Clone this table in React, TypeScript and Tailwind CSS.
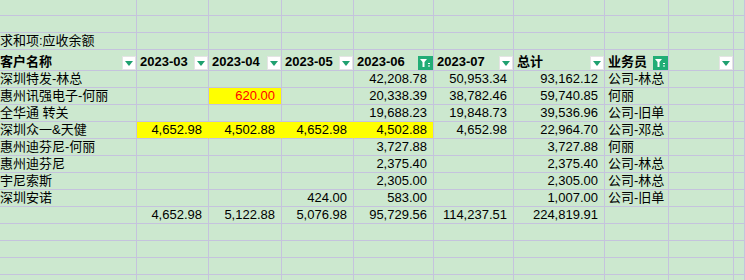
type Cell = { v?: string; hl?: boolean; red?: boolean };

const cols = ["", "2023-03", "2023-04", "2023-05", "2023-06", "2023-07", "总计", "业务员", ""];

const rows: { name: string; vals: Cell[]; rep: string }[] = [
    { name: "深圳特发-林总", vals: [{}, {}, {}, { v: "42,208.78" }, { v: "50,953.34" }, { v: "93,162.12" }], rep: "公司-林总" },
    { name: "惠州讯强电子-何丽", vals: [{}, { v: "620.00", hl: true, red: true }, {}, { v: "20,338.39" }, { v: "38,782.46" }, { v: "59,740.85" }], rep: "何丽" },
    { name: "全华通 转关", vals: [{}, {}, {}, { v: "19,688.23" }, { v: "19,848.73" }, { v: "39,536.96" }], rep: "公司-旧单" },
    {
        name: "深圳众一&天健",
        vals: [{ v: "4,652.98", hl: true }, { v: "4,502.88", hl: true }, { v: "4,652.98", hl: true }, { v: "4,502.88", hl: true }, { v: "4,652.98" }, { v: "22,964.70" }],
        rep: "公司-邓总",
    },
    { name: "惠州迪芬尼-何丽", vals: [{}, {}, {}, { v: "3,727.88" }, {}, { v: "3,727.88" }], rep: "何丽" },
    { name: "惠州迪芬尼", vals: [{}, {}, {}, { v: "2,375.40" }, {}, { v: "2,375.40" }], rep: "公司-林总" },
    { name: "宇尼索斯", vals: [{}, {}, {}, { v: "2,305.00" }, {}, { v: "2,305.00" }], rep: "公司-林总" },
    { name: "深圳安诺", vals: [{}, {}, { v: "424.00" }, { v: "583.00" }, {}, { v: "1,007.00" }], rep: "公司-旧单" },
];

const totals = ["4,652.98", "5,122.88", "5,076.98", "95,729.56", "114,237.51", "224,819.91"];

const grid = "grid grid-cols-[137px_72px_73px_72px_80px_80px_91px_64px_65px_1fr]";
const line = "border-r border-b border-[#c5c3dd]";

function Drop() {
    return (
        <div className="absolute right-0 bottom-0 w-[14px] h-[14px] bg-white border border-[#e4e4e4] flex items-center justify-center">
            <svg width="8" height="5" viewBox="0 0 8 5">
                <polygon points="0,0 8,0 4,5" fill="#1fa070" />
            </svg>
        </div>
    );
}

function FilterOn() {
    return (
        <div className="absolute right-0 bottom-0 w-[15px] h-[14px] bg-[#21ad76] flex items-center justify-center">
            <svg width="11" height="10" viewBox="0 0 11 10">
                <polygon points="0,1 7,1 4.5,4 4.5,9 2.5,9 2.5,4" fill="#ffffff" />
                <rect x="8" y="5" width="2" height="1" fill="#ffffff" />
                <rect x="8" y="7.5" width="2" height="1" fill="#ffffff" />
            </svg>
        </div>
    );
}

function EmptyRow({ h }: { h: string }) {
    return (
        <>
            {Array.from({ length: 10 }).map((_, i) => (
                <div key={i} className={`${h} ${line}`} />
            ))}
        </>
    );
}

export default function App() {
    return (
        <div
            className="w-[745px] h-[280px] overflow-hidden bg-[#cce8cf] text-black text-[13px] leading-[16px]"
            style={{ fontFamily: '"Liberation Sans", "Noto Sans CJK SC", sans-serif' }}
        >
            <div className={grid}>
                <EmptyRow h="h-[16px]" />
                <EmptyRow h="h-[17px]" />

                <div className={`h-[17px] ${line} flex items-end whitespace-nowrap overflow-visible`}>求和项:应收余额</div>
                {Array.from({ length: 9 }).map((_, i) => (
                    <div key={i} className={`h-[17px] ${line}`} />
                ))}

                {/* header row */}
                <div className={`h-[21px] ${line} relative flex items-end font-bold`}>
                    客户名称
                    <Drop />
                </div>
                {cols.slice(1).map((c, i) => (
                    <div key={i} className={`h-[21px] ${line} relative flex items-end pl-[3px] font-bold whitespace-nowrap`}>
                        {c}
                        {c === "2023-06" || c === "业务员" ? <FilterOn /> : <Drop />}
                    </div>
                ))}
                <div className={`h-[21px] ${line}`} />

                {rows.map((r) => (
                    <div key={r.name} className="contents">
                        <div className={`h-[17px] ${line} flex items-end whitespace-nowrap`}>{r.name}</div>
                        {r.vals.map((c, i) => {
                            const nextHl = r.vals[i + 1]?.hl && i < 3;
                            return (
                                <div
                                    key={i}
                                    className={`h-[17px] border-r border-b border-[#c5c3dd] flex items-end justify-end pr-[6px] ${
                                        c.hl ? "bg-[#ffff00]" : ""
                                    } ${c.hl && nextHl ? "border-r-[#ffff00]" : ""} ${c.red ? "text-[#ff0000]" : ""}`}
                                >
                                    {c.v}
                                </div>
                            );
                        })}
                        <div className={`h-[17px] ${line} flex items-end pl-[3px] whitespace-nowrap`}>{r.rep}</div>
                        <div className={`h-[17px] ${line}`} />
                        <div className={`h-[17px] ${line}`} />
                    </div>
                ))}

                {/* totals */}
                <div className={`h-[17px] ${line}`} />
                {totals.map((t) => (
                    <div key={t} className={`h-[17px] ${line} flex items-end justify-end pr-[6px]`}>
                        {t}
                    </div>
                ))}
                <div className={`h-[17px] ${line}`} />
                <div className={`h-[17px] ${line}`} />
                <div className={`h-[17px] ${line}`} />

                <EmptyRow h="h-[17px]" />
                <EmptyRow h="h-[17px]" />
                <EmptyRow h="h-[17px]" />
                <EmptyRow h="h-[17px]" />
            </div>
        </div>
    );
}
